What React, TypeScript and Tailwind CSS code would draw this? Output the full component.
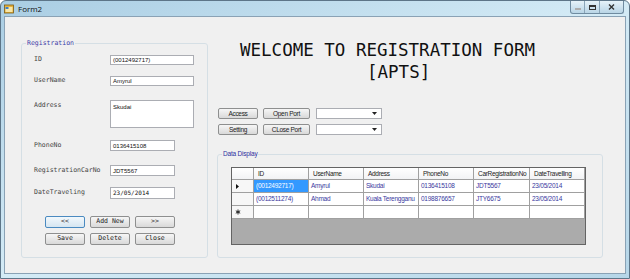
import React from 'react';

const mono = "font-['DejaVu_Sans_Mono',monospace]";
const sans = "font-['Liberation_Sans',Arial,sans-serif]";

const Btn = ({ label, w, focused = false, font = mono, size = 'text-[6.5px]' }: { label: string; w: string; focused?: boolean; font?: string; size?: string }) => (
  <div
    className={`${w} h-full flex items-center justify-center rounded-[2px] border ${
      focused ? 'border-[#4a8ac0] from-[#f2f8fc] to-[#d6e6f1]' : 'border-[#8e8f8f] from-[#f6f6f6] to-[#d9d9d9]'
    } bg-linear-to-b ${size} text-[#222] ${font}`}
  >
    {label}
  </div>
);

const Combo = () => (
  <div className="w-[66px] h-full bg-white border border-[#abadb3] flex items-center justify-end pr-[4px]">
    <svg width="5" height="3" viewBox="0 0 5 3">
      <path d="M0 0h5L2.5 3z" fill="#222" />
    </svg>
  </div>
);

const Field = ({ label, value, mt, h, w, top = false, monoValue = false }: { label: string; value: string; mt: string; h: string; w: string; top?: boolean; monoValue?: boolean }) => (
  <div className={`flex ${mt} ${top ? 'items-start' : 'items-center'}`}>
    <div className={`w-[76px] text-[6.5px] text-[#444] ${mono} ${top ? 'pt-[1px]' : ''}`}>{label}</div>
    <div className={`${w} ${h} bg-white border border-[#abadb3] pl-[2px] text-[6px] leading-[8px] text-[#111] ${monoValue ? mono : sans} ${top ? 'pt-[2px]' : 'flex items-center'}`}>
      {value}
    </div>
  </div>
);

const cols = ['ID', 'UserName', 'Address', 'PhoneNo', 'CarRegistrationNo', 'DateTravelling'];
const rows = [
  ['(0012492717)', 'Amyrul', 'Skudai', '0136415108', 'JDT5567', '23/05/2014'],
  ['(0012511274)', 'Ahmad', 'Kuala Terengganu', '0198876657', 'JTY6675', '23/05/2014'],
];

const gridCols = 'grid grid-cols-[22px_55px_55px_55px_55px_56px_55px]';

const DataGrid = () => (
  <div className="w-[355px] h-[78px] border border-[#646464] bg-[#ababab] ml-[13px] mt-[12px]">
    <div className={`${gridCols} h-[12px] bg-linear-to-b from-white to-[#f1f2f4]`}>
      <div className="border-r border-b border-[#a0a0a0]" />
      {cols.map((c) => (
        <div key={c} className={`border-r border-b border-[#a0a0a0] pl-[4px] text-[6.5px] leading-[11px] text-[#222] ${sans} tracking-[-0.3px] whitespace-nowrap overflow-hidden`}>
          {c}
        </div>
      ))}
    </div>
    {rows.map((r, i) => (
      <div key={i} className={`${gridCols} h-[13px] bg-white`}>
        <div className="border-r border-b border-[#a0a0a0] bg-[#f7f7f7] flex items-center pl-[4px]">
          {i === 0 && (
            <svg width="3" height="5" viewBox="0 0 3 5">
              <path d="M0 0l3 2.5L0 5z" fill="#111" />
            </svg>
          )}
        </div>
        {r.map((v, j) => (
          <div
            key={j}
            className={`border-r border-b border-[#a0a0a0] pl-[2px] text-[6.5px] leading-[12px] ${sans} tracking-[-0.25px] whitespace-nowrap overflow-hidden ${
              i === 0 && j === 0 ? 'bg-[#3399ff] text-white' : 'text-[#3a39a0]'
            }`}
          >
            {v}
          </div>
        ))}
      </div>
    ))}
    <div className={`${gridCols} h-[13px] bg-white`}>
      <div className="border-r border-b border-[#a0a0a0] bg-[#f7f7f7] flex items-center pl-[3px]">
        <svg width="6" height="6" viewBox="0 0 6 6">
          <path d="M3 0.5v5M0.8 1.8l4.4 2.4M0.8 4.2l4.4-2.4" stroke="#222" strokeWidth="1" />
        </svg>
      </div>
      {cols.map((c) => (
        <div key={c} className="border-r border-b border-[#a0a0a0]" />
      ))}
    </div>
  </div>
);

export default function App() {
  return (
    <div className="w-[630px] h-[279px] bg-linear-to-br from-[#a9cde3] via-[#d4ebf6] to-[#b6d6e8] border border-[#5d7588] rounded-t-[6px] overflow-hidden">
      {/* title bar */}
      <div className="h-[15px] flex">
        <div className="flex items-center h-full pl-[3px]">
          <svg width="10" height="10" viewBox="0 0 10 10">
            <rect x="0.5" y="1" width="9" height="8" fill="#e8b23a" stroke="#7a5a14" strokeWidth="0.8" />
            <rect x="1.5" y="3" width="7" height="5" fill="#f7e6a8" />
            <rect x="1.5" y="3" width="3" height="2" fill="#3f7fc4" />
          </svg>
          <span className={`ml-[4px] text-[8px] text-[#111] font-['Open_Sans',sans-serif]`}>Form2</span>
        </div>
        <div className="ml-auto mr-[5px] h-[13px] flex border border-t-0 border-[#6f8ba0] rounded-b-[3px] overflow-hidden bg-linear-to-b from-[#e6f2f9] to-[#b9d5e6]">
          <div className="w-[14px] flex items-end justify-center pb-[3px] border-r border-[#8aa5b8]">
            <div className="w-[6px] h-[2px] bg-[#333] border border-white/60" />
          </div>
          <div className="w-[15px] flex items-center justify-center border-r border-[#8aa5b8]">
            <div className="w-[7px] h-[5px] border border-[#333] border-t-2" />
          </div>
          <div className="w-[23px] flex items-center justify-center">
            <svg width="7" height="6" viewBox="0 0 7 6">
              <path d="M1 0.5l5 5M6 0.5l-5 5" stroke="#333" strokeWidth="1.4" />
            </svg>
          </div>
        </div>
      </div>

      {/* client */}
      <div className="mx-[3px] h-[258px] bg-[#f0f0f0] border border-[#8aa2b5] flex">
        {/* Registration group */}
        <div className="ml-[16px] mt-[26px] w-[187px] h-[215px] border border-[#d5dfe5] rounded-[3px] relative pl-[12px]">
          <span className={`absolute -top-[5px] left-[4px] px-[1px] bg-[#f0f0f0] text-[6.5px] leading-[8px] text-[#3c3ca8] ${mono}`}>
            Registration
          </span>
          <Field label="ID" value="(0012492717)" mt="mt-[11px]" h="h-[10px]" w="w-[84px]" />
          <Field label="UserName" value="Amyrul" mt="mt-[11px]" h="h-[10px]" w="w-[84px]" />
          <Field label="Address" value="Skudai" mt="mt-[14px]" h="h-[28px]" w="w-[84px]" top />
          <Field label="PhoneNo" value="0136415108" mt="mt-[12px]" h="h-[11px]" w="w-[65px]" />
          <Field label="RegistrationCarNo" value="JDT5567" mt="mt-[14px]" h="h-[11px]" w="w-[65px]" />
          <Field label="DateTraveling" value="23/05/2014" mt="mt-[11px]" h="h-[12px]" w="w-[65px]" monoValue />
          <div className="flex gap-[5px] h-[12px] mt-[17px] pl-[11px]">
            <Btn label="<<" w="w-[40px]" focused />
            <Btn label="Add New" w="w-[40px]" />
            <Btn label=">>" w="w-[40px]" />
          </div>
          <div className="flex gap-[5px] h-[12px] mt-[5px] pl-[11px]">
            <Btn label="Save" w="w-[40px]" />
            <Btn label="Delete" w="w-[40px]" />
            <Btn label="Close" w="w-[40px]" />
          </div>
        </div>

        {/* right side */}
        <div className="ml-[9px] w-[387px] flex flex-col">
          <div className={`mt-[22px] text-[17.5px] leading-[22px] text-[#111] ${mono}`}>
            <div className="pl-[23px]">WELCOME TO REGISTRATION FORM</div>
            <div className="pl-[150px]">[APTS]</div>
          </div>
          <div className="flex h-[11px] mt-[25px] ml-[1px]">
            <Btn label="Access" w="w-[40px]" font={`${sans} tracking-[-0.3px]`} size="text-[6.5px]" />
            <div className="w-[5px]" />
            <Btn label="Open Port" w="w-[47px]" font={`${sans} tracking-[-0.3px]`} size="text-[6.5px]" />
            <div className="w-[6px]" />
            <Combo />
          </div>
          <div className="flex h-[11px] mt-[5px] ml-[1px]">
            <Btn label="Setting" w="w-[40px]" font={`${sans} tracking-[-0.3px]`} size="text-[6.5px]" />
            <div className="w-[5px]" />
            <Btn label="CLose Port" w="w-[47px]" font={`${sans} tracking-[-0.3px]`} size="text-[6.5px]" />
            <div className="w-[6px]" />
            <Combo />
          </div>
          <div className="mt-[19px] w-[386px] h-[104px] border border-[#d5dfe5] rounded-[3px] relative">
            <span className={`absolute -top-[5px] left-[4px] px-[1px] bg-[#f0f0f0] text-[6.5px] leading-[8px] text-[#2f2fa0] ${sans} tracking-[-0.2px]`}>
              Data Display
            </span>
            <DataGrid />
          </div>
        </div>
      </div>
    </div>
  );
}
